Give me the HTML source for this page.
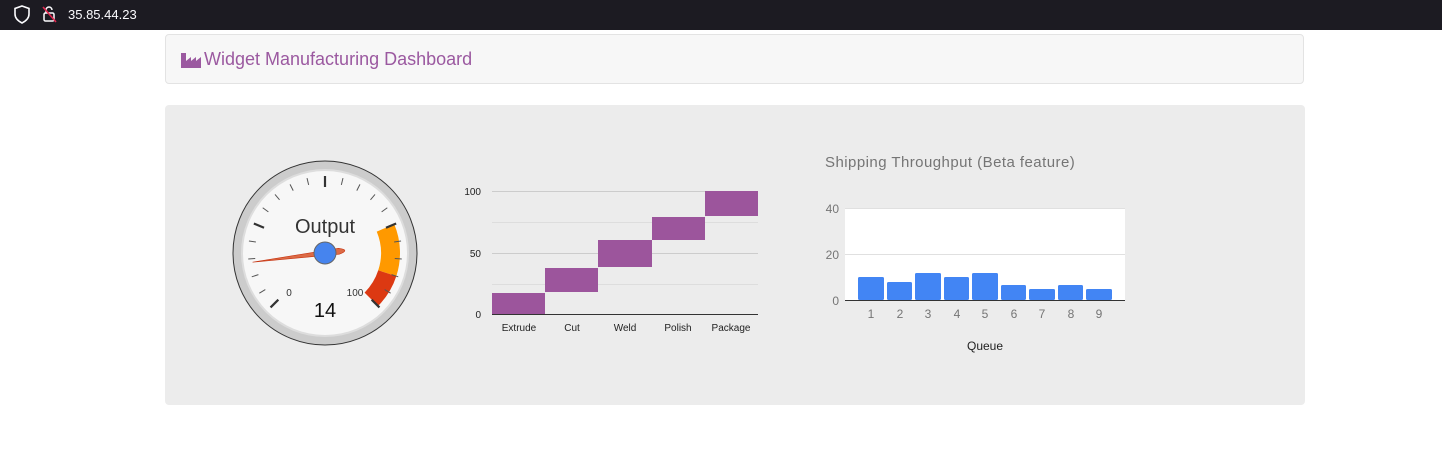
<!DOCTYPE html>
<html><head><meta charset="utf-8"><style>
html,body{margin:0;padding:0;background:#fff;width:1442px;height:464px;overflow:hidden;font-family:"Liberation Sans",Arial,sans-serif}
.bar{position:absolute;left:0;top:0;width:1442px;height:30px;background:#1c1b22}
.hdr{position:absolute;left:165px;top:34px;width:1139px;height:50px;background:#f7f7f7;border:1px solid #e3e3e3;border-radius:4px;box-sizing:border-box}
.hdr span{position:absolute;left:38px;top:14px;font-size:18px;color:#9b59a0}
.panel{position:absolute;left:165px;top:105px;width:1140px;height:300px;background:#ececec;border-radius:4px}
svg text{font-family:"Liberation Sans",Arial,sans-serif}
</style></head><body>
<div class="bar">
<svg width="200" height="30" style="position:absolute;left:0;top:0">
<path d="M22 6 L29 8.5 V14 C29 18.5 26 21 22 23 C18 21 15 18.5 15 14 V8.5 Z" fill="none" stroke="#fbfbfe" stroke-width="1.6"/>
<rect x="44" y="13" width="10" height="8" rx="1.5" fill="none" stroke="#fbfbfe" stroke-width="1.5"/>
<path d="M46 13 V10 a3 3 0 0 1 6 0" fill="none" stroke="#fbfbfe" stroke-width="1.5"/>
<line x1="43" y1="7" x2="56" y2="22" stroke="#e22850" stroke-width="1.6"/>
<text x="68" y="19" fill="#fbfbfe" font-size="13">35.85.44.23</text>
</svg>
</div>
<div class="hdr">
<svg width="20" height="16" style="position:absolute;left:15px;top:17px"><path d="M0 16 V1 H5 V9 L10 5 V9 L15 5 V9 L20 5 V16 Z" fill="#9b59a0"/></svg>
<span>Widget Manufacturing Dashboard</span></div>
<div class="panel"></div>
<svg width="1442" height="464" style="position:absolute;left:0;top:0">
<g transform="translate(325,253)">
<circle r="92" fill="#ccc" stroke="#333" stroke-width="1"/>
<circle r="84" fill="#ddd"/>
<circle r="82" fill="#f7f7f7"/>
<path d="M69.29,-28.70 A75 75 0 0 1 71.33,23.18 L53.26,17.30 A56 56 0 0 0 51.74,-21.43 Z" fill="#ff9900"/>
<path d="M71.33,23.18 A75 75 0 0 1 53.03,53.03 L39.60,39.60 A56 56 0 0 0 53.26,17.30 Z" fill="#dc3912"/>
<g stroke="#333" stroke-width="2.2">
<line x1="0" y1="-66" x2="0" y2="-77" transform="rotate(-135)"/>
<line x1="0" y1="-66" x2="0" y2="-77" transform="rotate(-67.5)"/>
<line x1="0" y1="-66" x2="0" y2="-77"/>
<line x1="0" y1="-66" x2="0" y2="-77" transform="rotate(67.5)"/>
<line x1="0" y1="-66" x2="0" y2="-77" transform="rotate(135)"/>
</g>
<g stroke="#555" stroke-width="1">
<line y1="-70" y2="-77" transform="rotate(-121.5)"/><line y1="-70" y2="-77" transform="rotate(-108)"/><line y1="-70" y2="-77" transform="rotate(-94.5)"/><line y1="-70" y2="-77" transform="rotate(-81)"/>
<line y1="-70" y2="-77" transform="rotate(-54)"/><line y1="-70" y2="-77" transform="rotate(-40.5)"/><line y1="-70" y2="-77" transform="rotate(-27)"/><line y1="-70" y2="-77" transform="rotate(-13.5)"/>
<line y1="-70" y2="-77" transform="rotate(13.5)"/><line y1="-70" y2="-77" transform="rotate(27)"/><line y1="-70" y2="-77" transform="rotate(40.5)"/><line y1="-70" y2="-77" transform="rotate(54)"/>
<line y1="-70" y2="-77" transform="rotate(81)"/><line y1="-70" y2="-77" transform="rotate(94.5)"/><line y1="-70" y2="-77" transform="rotate(108)"/><line y1="-70" y2="-77" transform="rotate(121.5)"/>
</g>
<text x="0" y="-20" text-anchor="middle" font-size="20" fill="#333">Output</text>
<text x="-36" y="43" text-anchor="middle" font-size="10" fill="#333">0</text>
<text x="30" y="43" text-anchor="middle" font-size="10" fill="#333">100</text>
<text x="0" y="64" text-anchor="middle" font-size="20" fill="#111">14</text>
<g transform="rotate(-97.2)">
<path d="M-2.5,0 L0,-73 L2.5,0 L3,14 Q0,26 -3,14 Z" fill="#dc6a45" stroke="#c63310" stroke-width="0.6"/>
</g>
<circle r="11" fill="#4684ee" stroke="#666" stroke-width="1"/>
</g>
<g stroke="#ccc" stroke-width="1">
<line x1="492" y1="191.5" x2="758" y2="191.5"/>
<line x1="492" y1="253.5" x2="758" y2="253.5"/>
</g>
<g stroke="#ddd" stroke-width="1">
<line x1="492" y1="222.5" x2="758" y2="222.5"/>
<line x1="492" y1="284.5" x2="758" y2="284.5"/>
</g>
<g fill="#9c559c">
<rect x="492" y="293" width="53" height="21"/>
<rect x="545" y="268" width="53" height="24"/>
<rect x="598" y="240" width="54" height="27"/>
<rect x="652" y="217" width="53" height="23"/>
<rect x="705" y="191" width="53" height="25"/>
</g>
<line x1="492" y1="314.5" x2="758" y2="314.5" stroke="#333"/>
<g font-size="10" fill="#222" text-anchor="end">
<text x="481" y="195">100</text><text x="481" y="257">50</text><text x="481" y="318">0</text>
</g>
<g font-size="10" fill="#222" text-anchor="middle">
<text x="519" y="331">Extrude</text><text x="572" y="331">Cut</text><text x="625" y="331">Weld</text><text x="678" y="331">Polish</text><text x="731" y="331">Package</text>
</g>
<text x="825" y="167" font-size="15" fill="#757575" letter-spacing="0.45">Shipping Throughput (Beta feature)</text>
<rect x="845" y="208" width="280" height="92" fill="#fff"/>
<line x1="845" y1="208.5" x2="1125" y2="208.5" stroke="#e0e0e0"/>
<line x1="845" y1="254.5" x2="1125" y2="254.5" stroke="#e0e0e0"/>
<g fill="#4285f4">
<rect x="858" y="277" width="26" height="23" rx="1.5"/>
<rect x="887" y="282" width="25" height="18" rx="1.5"/>
<rect x="915" y="273" width="26" height="27" rx="1.5"/>
<rect x="944" y="277" width="25" height="23" rx="1.5"/>
<rect x="972" y="273" width="26" height="27" rx="1.5"/>
<rect x="1001" y="285" width="25" height="15" rx="1.5"/>
<rect x="1029" y="289" width="26" height="11" rx="1.5"/>
<rect x="1058" y="285" width="25" height="15" rx="1.5"/>
<rect x="1086" y="289" width="26" height="11" rx="1.5"/>
</g>
<line x1="845" y1="300.5" x2="1125" y2="300.5" stroke="#333"/>
<g font-size="12" fill="#757575" text-anchor="end">
<text x="839" y="213">40</text><text x="839" y="259">20</text><text x="839" y="305">0</text>
</g>
<g font-size="12" fill="#757575" text-anchor="middle">
<text x="871" y="318">1</text><text x="900" y="318">2</text><text x="928" y="318">3</text><text x="957" y="318">4</text><text x="985" y="318">5</text><text x="1014" y="318">6</text><text x="1042" y="318">7</text><text x="1071" y="318">8</text><text x="1099" y="318">9</text>
</g>
<text x="985" y="350" font-size="12" fill="#222" text-anchor="middle">Queue</text>
</svg>
</body></html>
